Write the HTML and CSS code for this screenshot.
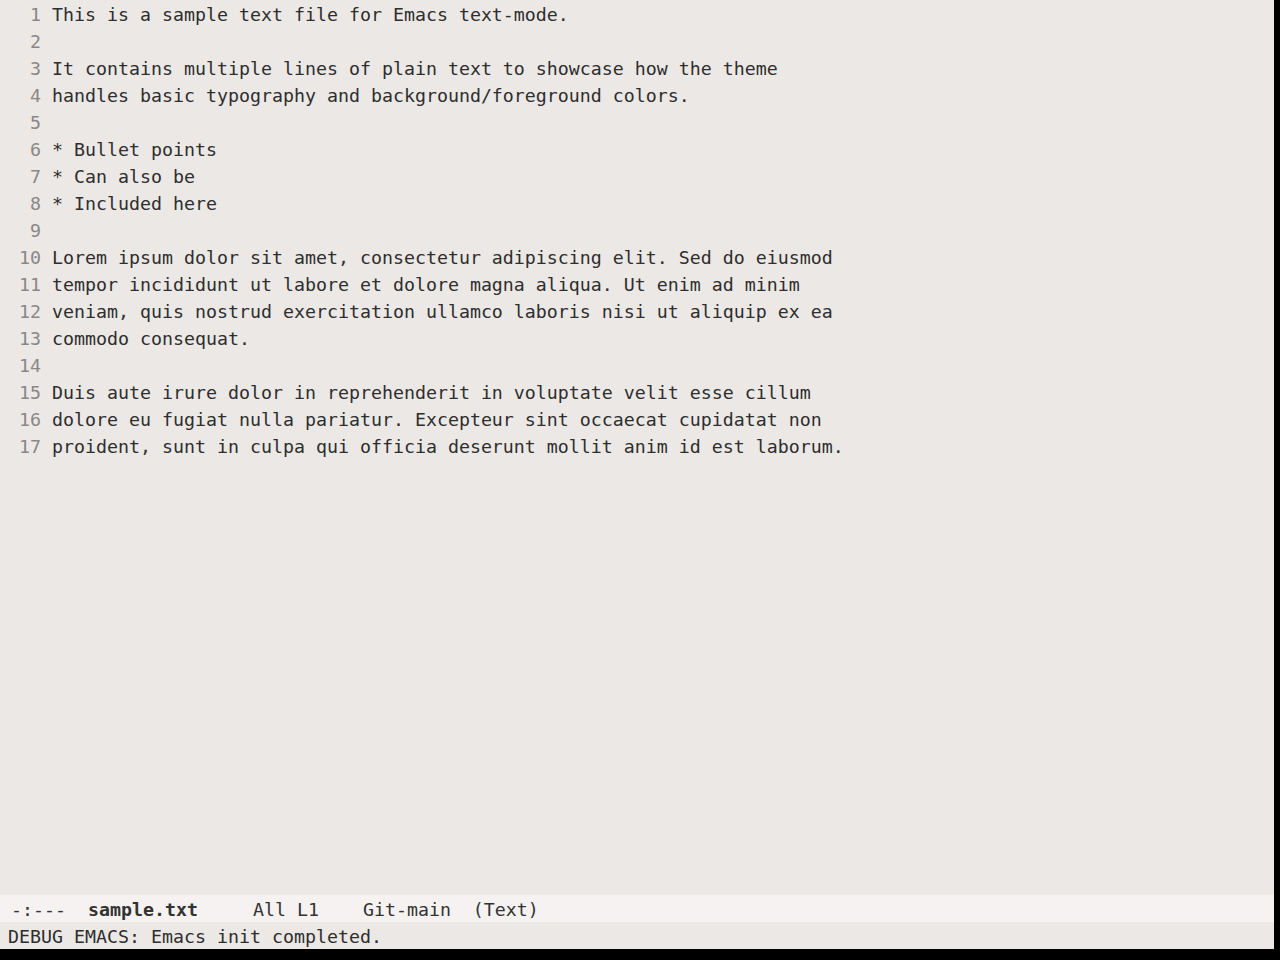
FILE: index.html
```html
<!DOCTYPE html>
<html lang="en">
<head>
    <meta charset="UTF-8">
    <title>sample.txt - Emacs</title>
    <link rel="stylesheet" href="styles.css">
</head>
<body>
    <div class="frame">
        <!-- buffer window -->
        <div class="buffer">
            <div class="line"><span class="num">1</span><span class="text">This is a sample text file for Emacs text-mode.</span></div>
            <div class="line"><span class="num">2</span><span class="text"></span></div>
            <div class="line"><span class="num">3</span><span class="text">It contains multiple lines of plain text to showcase how the theme</span></div>
            <div class="line"><span class="num">4</span><span class="text">handles basic typography and background/foreground colors.</span></div>
            <div class="line"><span class="num">5</span><span class="text"></span></div>
            <div class="line"><span class="num">6</span><span class="text">* Bullet points</span></div>
            <div class="line"><span class="num">7</span><span class="text">* Can also be</span></div>
            <div class="line"><span class="num">8</span><span class="text">* Included here</span></div>
            <div class="line"><span class="num">9</span><span class="text"></span></div>
            <div class="line"><span class="num">10</span><span class="text">Lorem ipsum dolor sit amet, consectetur adipiscing elit. Sed do eiusmod</span></div>
            <div class="line"><span class="num">11</span><span class="text">tempor incididunt ut labore et dolore magna aliqua. Ut enim ad minim</span></div>
            <div class="line"><span class="num">12</span><span class="text">veniam, quis nostrud exercitation ullamco laboris nisi ut aliquip ex ea</span></div>
            <div class="line"><span class="num">13</span><span class="text">commodo consequat.</span></div>
            <div class="line"><span class="num">14</span><span class="text"></span></div>
            <div class="line"><span class="num">15</span><span class="text">Duis aute irure dolor in reprehenderit in voluptate velit esse cillum</span></div>
            <div class="line"><span class="num">16</span><span class="text">dolore eu fugiat nulla pariatur. Excepteur sint occaecat cupidatat non</span></div>
            <div class="line"><span class="num">17</span><span class="text">proident, sunt in culpa qui officia deserunt mollit anim id est laborum.</span></div>
        </div>

        <!-- mode line -->
        <div class="mode-line"> -:---  <b>sample.txt</b>     All L1    Git-main  (Text)</div>

        <!-- echo area -->
        <div class="echo">DEBUG EMACS: Emacs init completed.</div>
    </div>
</body>
</html>
```

FILE: styles.css
```css
body {
    margin: 0;
    background-color: #000;
    font-family: "DejaVu Sans Mono", monospace;
    font-size: 18.27px;
    line-height: 27px;
    color: #2e2e2e;
}

.frame {
    width: 1274px;
    height: 949px;
    display: flex;
    flex-direction: column;
    background-color: #ece8e6;
}

.buffer {
    flex: 1;
    padding-left: 8px;
}

.line {
    display: flex;
    height: 26px; /* + 1px top padding = 27px row */
    padding-top: 1px;
    white-space: pre;
}

.num {
    width: 33px; /* 3 cells, right aligned */
    padding-right: 11px;
    text-align: right;
    color: #8a8786;
}

.mode-line {
    height: 28px;
    padding-top: 1px;
    line-height: 27px;
    white-space: pre;
    background-color: #f5f2f1;
    border-top: 1px solid #efebea;
    box-sizing: border-box;
    color: #333;
}

.mode-line b {
    font-weight: bold;
}

.echo {
    height: 26px;
    padding-top: 1px;
    padding-left: 8px;
    white-space: pre;
}
```
